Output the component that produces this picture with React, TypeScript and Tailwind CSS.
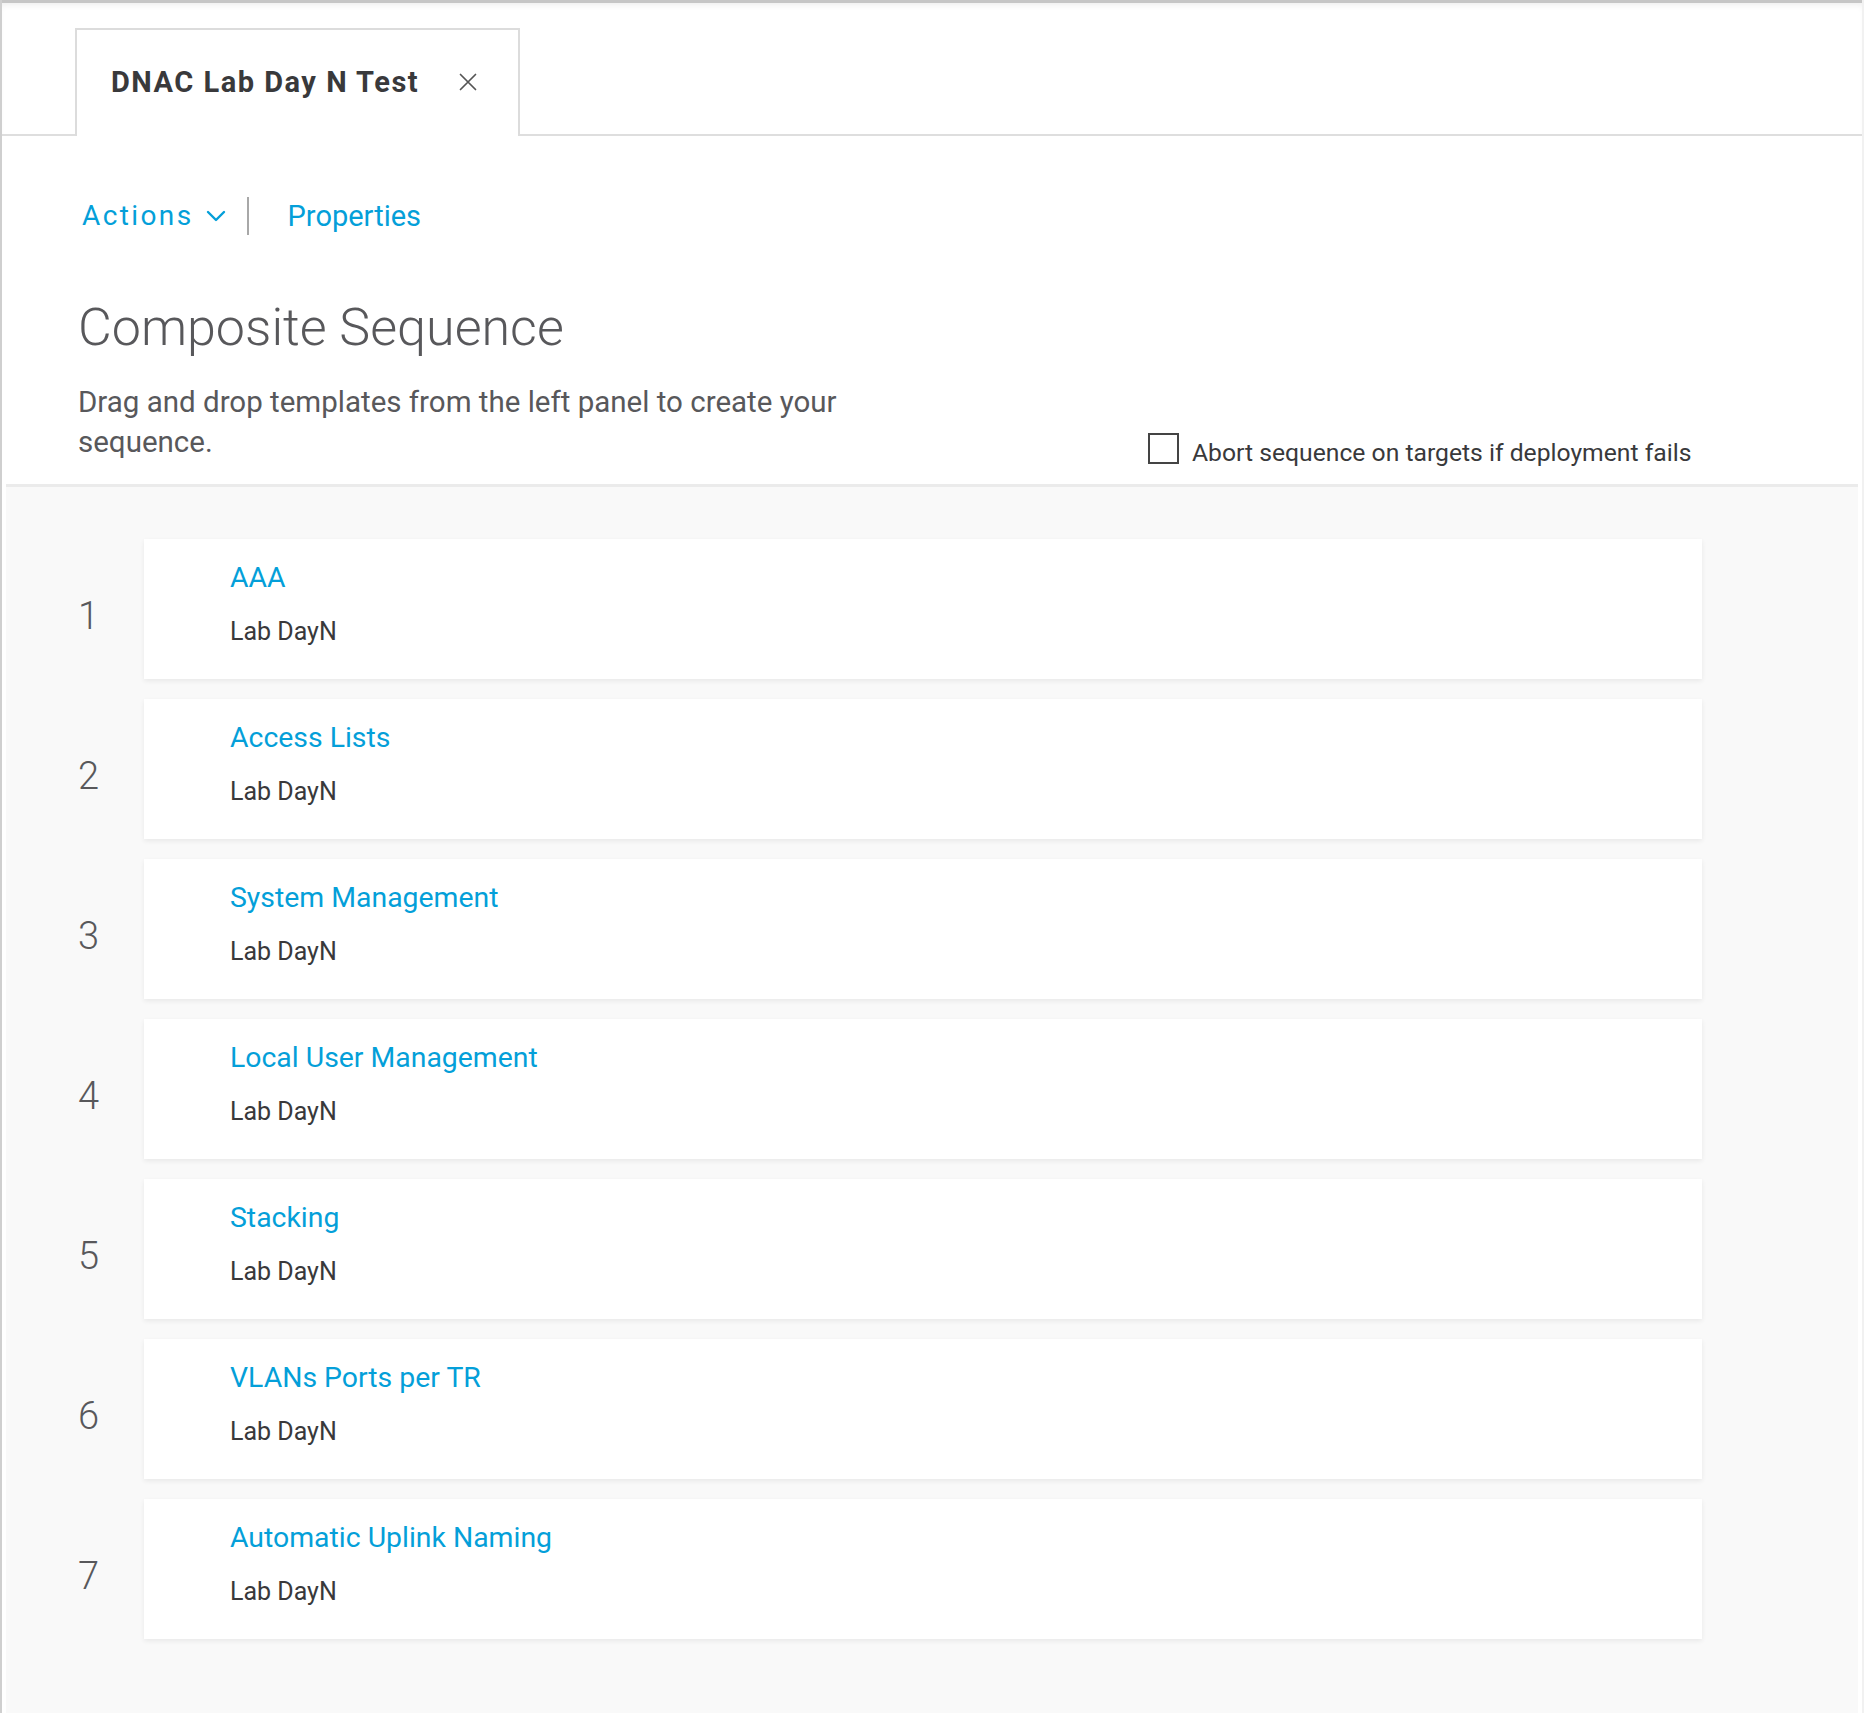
import React from "react";

const items = [
  "AAA",
  "Access Lists",
  "System Management",
  "Local User Management",
  "Stacking",
  "VLANs Ports per TR",
  "Automatic Uplink Naming",
];

export default function App() {
  return (
    <div
      className="w-[1864px] h-[1713px] bg-white flex flex-col border-l-2 border-[#cfcfcf] border-r-2 border-r-[#f1f1f1] overflow-hidden"
      style={{ fontFamily: "Roboto, 'Noto Sans', sans-serif" }}
    >
      {/* header with tab */}
      <div className="box-border h-[136px] border-t-[3px] border-[#c6c6c6] border-b-2 border-b-[#dedede] pt-[25px] shadow-[inset_0_5px_6px_-3px_rgba(0,0,0,0.07)]">
        <div className="relative z-10 ml-[73px] w-[445px] h-[108px] bg-white border-2 border-b-0 border-[#dcdcdc] flex items-center pl-[34px] pb-[2px]">
          <span className="text-[29px] font-bold text-[#39393b] tracking-[1.5px] leading-none">
            DNAC Lab Day N Test
          </span>
          <svg
            className="ml-[40px]"
            width="18"
            height="18"
            viewBox="0 0 18 18"
            fill="none"
            stroke="#555"
            strokeWidth="1.7"
            strokeLinecap="round"
          >
            <path d="M1.5 1.5 L16.5 16.5 M16.5 1.5 L1.5 16.5" />
          </svg>
        </div>
      </div>

      {/* actions row */}
      <div className="flex items-center h-[40px] mt-[60px] pl-[80px]">
        <span className="text-[28px] tracking-[2.4px] text-[#049fd9] leading-none">Actions</span>
        <svg
          className="ml-[12px]"
          width="20"
          height="12"
          viewBox="0 0 20 12"
          fill="none"
          stroke="#049fd9"
          strokeWidth="2.4"
          strokeLinecap="round"
          strokeLinejoin="round"
        >
          <path d="M2 2 L10 10 L18 2" />
        </svg>
        <div className="ml-[21px] w-[2px] h-[38px] bg-[#a8a8a8]" />
        <span className="ml-[39px] text-[29px] text-[#049fd9] leading-none">Properties</span>
      </div>

      {/* heading */}
      <div className="mt-[62px] pl-[76px] h-[60px] flex items-center">
        <h1 className="text-[52px] font-light text-[#58585b] leading-[60px]">Composite Sequence</h1>
      </div>

      {/* description + checkbox */}
      <div className="mt-[24px] pl-[76px] flex items-end">
        <div className="w-[1070px]">
          <p className="max-w-[800px] text-[29.5px] leading-[40px] text-[#58585b]">
            Drag and drop templates from the left panel to create your sequence.
          </p>
        </div>
        <label className="flex items-center mb-[-7px]">
          <span className="w-[31px] h-[31px] border-2 border-[#444] bg-white box-border" />
          <span className="ml-[13px] pt-[9px] text-[24.7px] leading-[32px] text-[#39393b]">
            Abort sequence on targets if deployment fails
          </span>
        </label>
      </div>

      {/* sequence list */}
      <div className="mt-[22px] mx-[4px] flex-1 border-t-[3px] border-[#ebebeb] bg-[#f9f9f9] pt-[52px]">
        <div className="flex flex-col gap-[20px]">
          {items.map((name, i) => (
            <div key={name} className="flex items-center">
              <div className="w-[138px] pl-[72px] pt-[14px] text-[38px] font-light text-[#58585b] leading-none">
                {i + 1}
              </div>
              <div className="w-[1558px] h-[140px] bg-white shadow-[0_2px_5px_rgba(0,0,0,0.07)] pl-[86px] pt-[22px]">
                <div className="text-[28.4px] leading-[34px] text-[#049fd9]">{name}</div>
                <div className="mt-[22px] text-[25px] leading-[30px] text-[#39393b]">Lab DayN</div>
              </div>
            </div>
          ))}
        </div>
      </div>
    </div>
  );
}
